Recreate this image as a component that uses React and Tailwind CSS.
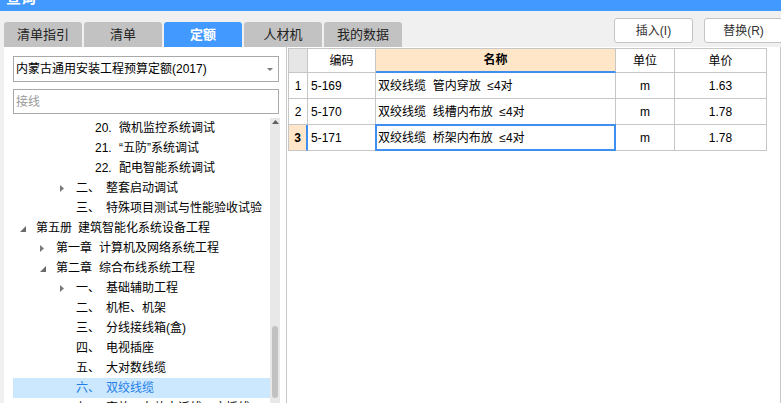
import clsx from "clsx";

const tabs = ["清单指引", "清单", "定额", "人材机", "我的数据"];

// pad 是行首缩进（相对树区域左边 13px）
const tree = [
  { pad: "pl-[82px]", idx: "20.", idxW: "w-[24px]", text: "微机监控系统调试" },
  { pad: "pl-[82px]", idx: "21.", idxW: "w-[24px]", text: "“五防”系统调试" },
  { pad: "pl-[82px]", idx: "22.", idxW: "w-[24px]", text: "配电智能系统调试" },
  { pad: "pl-[45px]", icon: "closed", idx: "二、", idxW: "w-[30px]", text: "整套启动调试" },
  { pad: "pl-[45px]", icon: "none", idx: "三、", idxW: "w-[30px]", text: "特殊项目测试与性能验收试验" },
  { pad: "pl-[5px]", icon: "open", idx: "第五册", idxW: "w-[42px]", text: "建筑智能化系统设备工程" },
  { pad: "pl-[25px]", icon: "closed", idx: "第一章", idxW: "w-[43px]", text: "计算机及网络系统工程" },
  { pad: "pl-[25px]", icon: "open", idx: "第二章", idxW: "w-[43px]", text: "综合布线系统工程" },
  { pad: "pl-[45px]", icon: "closed", idx: "一、", idxW: "w-[30px]", text: "基础辅助工程" },
  { pad: "pl-[45px]", icon: "none", idx: "二、", idxW: "w-[30px]", text: "机柜、机架" },
  { pad: "pl-[45px]", icon: "none", idx: "三、", idxW: "w-[30px]", text: "分线接线箱(盒)" },
  { pad: "pl-[45px]", icon: "none", idx: "四、", idxW: "w-[30px]", text: "电视插座" },
  { pad: "pl-[45px]", icon: "none", idx: "五、", idxW: "w-[30px]", text: "大对数线缆" },
  { pad: "pl-[45px]", icon: "none", idx: "六、", idxW: "w-[30px]", text: "双绞线缆", sel: true },
  { pad: "pl-[45px]", icon: "none", idx: "七、", idxW: "w-[30px]", text: "穿放、布放电话线、广播线" },
];

const rows = [
  { no: "1", code: "5-169", name: "双绞线缆  管内穿放  ≤4对", unit: "m", price: "1.63" },
  { no: "2", code: "5-170", name: "双绞线缆  线槽内布放  ≤4对", unit: "m", price: "1.78" },
  { no: "3", code: "5-171", name: "双绞线缆  桥架内布放  ≤4对", unit: "m", price: "1.78", sel: true },
];

function Tri({ type }) {
  if (type === "closed")
    return (
      <svg width="4" height="7" className="mt-[1px]">
        <polygon points="0,0 4,3.5 0,7" fill="#7a7a7a" />
      </svg>
    );
  if (type === "open")
    return (
      <svg width="6" height="6" className="mt-[2px]">
        <polygon points="6,0 6,6 0,6" fill="#6a6a6a" />
      </svg>
    );
  return null;
}

function TreeRow({ row }) {
  return (
    <div
      className={clsx(
        "h-[20px] flex items-center whitespace-nowrap",
        row.pad,
        row.sel ? "bg-[#cce8ff] text-[#1f7fe8]" : "text-black"
      )}
    >
      {row.icon && (
        <span className="w-[18px] h-[20px] flex items-center pl-[2px]">
          <Tri type={row.icon} />
        </span>
      )}
      <span className={clsx("shrink-0", row.idxW)}>{row.idx}</span>
      <span>{row.text}</span>
    </div>
  );
}

const cell = "border-r border-b border-[#c6c6c6] flex items-center";

export default function App() {
  return (
    <div className="w-[781px] h-[403px] overflow-hidden bg-[#f0f0f0] font-['Liberation_Sans','Noto_Sans_CJK_SC',sans-serif] text-[12px] leading-[16px] text-black">
      {/* 标题栏（只露出底部） */}
      <div className="h-[11px] bg-[#4299ff] overflow-hidden">
        <div className="mt-[-10px] pl-[6px] text-white text-[15px] leading-[16px] font-bold">查询</div>
      </div>

      {/* 页签 + 按钮 */}
      <div className="h-[36px] flex pl-[4px]">
        <div className="flex gap-[2px] items-end">
          {tabs.map((t) => (
            <div
              key={t}
              className={clsx(
                "w-[78px] h-[25px] rounded-t-[3px] flex items-center justify-center text-[13px]",
                t === "定额" ? "bg-[#4299ff] text-white font-bold" : "bg-[#c2c2c2] text-[#222]"
              )}
            >
              {t}
            </div>
          ))}
        </div>
        <div className="flex-1" />
        <div className="flex gap-[11px] mt-[7px] mr-[-2px]">
          <button className="w-[79px] h-[25px] rounded-[3px] border border-[#c4c4c4] bg-white text-[12px] text-[#333]">
            插入(I)
          </button>
          <button className="w-[79px] h-[25px] rounded-[3px] border border-[#c4c4c4] bg-white text-[12px] text-[#333]">
            替换(R)
          </button>
        </div>
      </div>

      <div className="flex h-[356px] pl-[4px]">
        {/* 左侧定额树 */}
        <div className="w-[283px] shrink-0 bg-white border-r border-[#c8c8c8] pt-[9px] pl-[9px] pr-[6px] flex flex-col">
          <div className="h-[26px] mr-[1px] border border-[#a9a9a9] flex items-center pl-[2px] pr-[5px]">
            <span className="flex-1">内蒙古通用安装工程预算定额(2017)</span>
            <svg width="6" height="3">
              <polygon points="0,0 6,0 3,3" fill="#7a7a7a" />
            </svg>
          </div>
          <div className="h-[25px] mr-[1px] mt-[7px] border border-[#a9a9a9] flex items-center pl-[2px] text-[#9a9a9a]">
            接线
          </div>
          <div className="mt-[4px] flex flex-1 overflow-hidden">
            <div className="flex-1">
              {tree.map((r, i) => (
                <TreeRow key={i} row={r} />
              ))}
            </div>
            <div className="w-[10px] bg-[#e8e8e8] flex flex-col items-center">
              <svg width="7" height="4" className="mt-[2px]">
                <polygon points="3.5,0 7,4 0,4" fill="#5f5f5f" />
              </svg>
              <div className="flex-1" />
              <div className="w-[6px] h-[72px] rounded-[3px] bg-[#c2c2c2] mb-[5px]" />
            </div>
          </div>
        </div>

        {/* 右侧定额列表 */}
        <div className="flex-1 bg-white pt-[1px] pl-[1px] border-r border-[#c8c8c8]">
          <div className="grid grid-cols-[19px_68px_240px_59px_92px] w-[479px] border-l border-t border-[#c6c6c6]">
            <div className={clsx(cell, "h-[24px] bg-[#e6e6e6]")} />
            <div className={clsx(cell, "h-[24px] justify-center")}>编码</div>
            <div className={clsx(cell, "h-[24px] justify-center bg-[#ffe6c8] font-bold border-b-2 border-b-[#3f8ff0]")}>
              名称
            </div>
            <div className={clsx(cell, "h-[24px] justify-center")}>单位</div>
            <div className={clsx(cell, "h-[24px] justify-center")}>单价</div>

            {rows.map((r) => (
              <div key={r.no} className="contents">
                <div
                  className={clsx(
                    cell,
                    "h-[26px] justify-center",
                    r.sel && "bg-[#ffe6c8] font-bold border-r-2 border-r-[#3f8ff0]"
                  )}
                >
                  {r.no}
                </div>
                <div className={clsx(cell, "h-[26px] pl-[3px]")}>{r.code}</div>
                <div className={clsx(cell, "h-[26px] pl-[2px] relative whitespace-pre")}>
                  {r.name}
                  {r.sel && <div className="absolute -inset-px border-2 border-[#3f8ff0]" />}
                </div>
                <div className={clsx(cell, "h-[26px] justify-center")}>{r.unit}</div>
                <div className={clsx(cell, "h-[26px] justify-center")}>{r.price}</div>
              </div>
            ))}
          </div>
        </div>
      </div>
    </div>
  );
}
